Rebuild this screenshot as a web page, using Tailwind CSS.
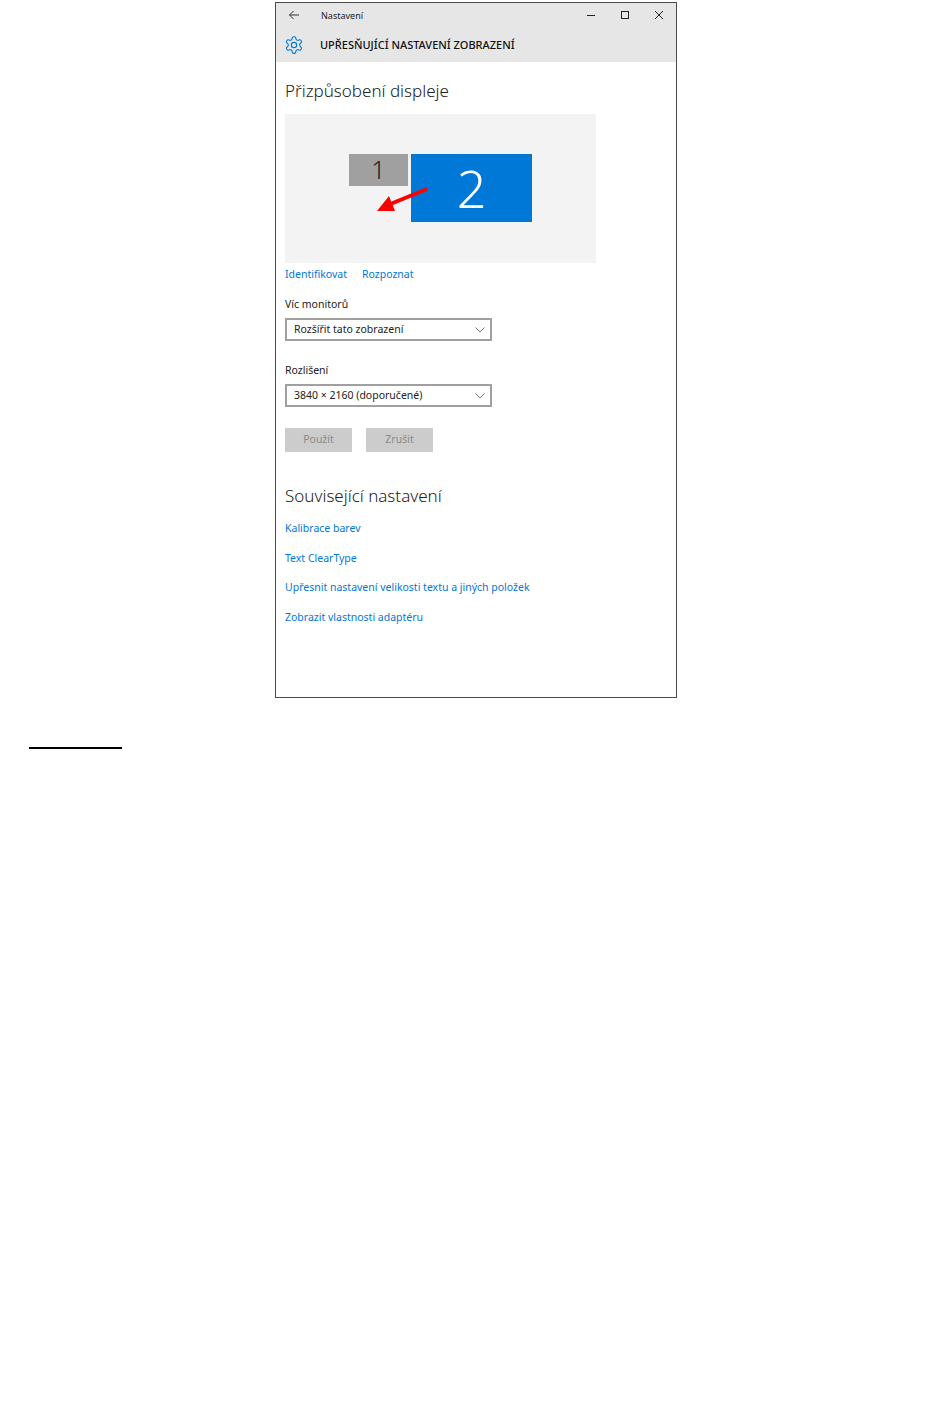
<!DOCTYPE html>
<html lang="cs">
<head>
  <meta charset="UTF-8" />
  <title>Nastavení</title>
  <script src="https://cdn.jsdelivr.net/npm/@tailwindcss/browser@4"></script>
</head>
<body class="h-[1408px] bg-white overflow-hidden font-['Noto_Sans','Open_Sans',sans-serif]">

  <!-- settings window -->
  <div class="ml-[275px] mt-[2px] w-[402px] h-[696px] border border-[#4a4a4a] flex flex-col">
    <div class="bg-[#e6e6e6] h-[59px] shrink-0">
      <div class="h-[24px] flex items-center text-[#222]">
        <svg class="ml-[12px] w-[12px] h-[12px]" viewBox="0 0 12 12" fill="none" stroke="#333" stroke-width="1"><path d="M11 6H1.5M5.5 2 1.5 6l4 4"/></svg>
        <span class="ml-[21px] text-[9px] leading-none">Nastavení</span>
        <svg class="ml-auto w-[10px] h-[10px]" viewBox="0 0 10 10" stroke="#222" fill="none"><path d="M1 5.5h8"/></svg>
        <svg class="ml-[24px] w-[10px] h-[10px]" viewBox="0 0 10 10" stroke="#222" fill="none"><rect x="1.5" y="1.5" width="7" height="7"/></svg>
        <svg class="ml-[24px] mr-[12px] w-[10px] h-[10px]" viewBox="0 0 10 10" stroke="#222" fill="none"><path d="m1 1 8 8M9 1 1 9"/></svg>
      </div>
      <div class="h-[35px] flex items-center">
        <svg class="ml-[8px] w-[20px] h-[20px]" viewBox="0 0 24 24" fill="none" stroke="#0078d7" stroke-width="1.3" stroke-linejoin="round"><circle cx="12" cy="12" r="3.2"/><path d="M12.22 2h-.44a2 2 0 0 0-2 2v.18a2 2 0 0 1-1 1.73l-.43.25a2 2 0 0 1-2 0l-.15-.08a2 2 0 0 0-2.73.73l-.22.38a2 2 0 0 0 .73 2.73l.15.1a2 2 0 0 1 1 1.72v.51a2 2 0 0 1-1 1.74l-.15.09a2 2 0 0 0-.73 2.73l.22.38a2 2 0 0 0 2.73.73l.15-.08a2 2 0 0 1 2 0l.43.25a2 2 0 0 1 1 1.73V20a2 2 0 0 0 2 2h.44a2 2 0 0 0 2-2v-.18a2 2 0 0 1 1-1.73l.43-.25a2 2 0 0 1 2 0l.15.08a2 2 0 0 0 2.73-.73l.22-.39a2 2 0 0 0-.73-2.73l-.15-.08a2 2 0 0 1-1-1.74v-.5a2 2 0 0 1 1-1.74l.15-.09a2 2 0 0 0 .73-2.73l-.22-.38a2 2 0 0 0-2.73-.73l-.15.08a2 2 0 0 1-2 0l-.43-.25a2 2 0 0 1-1-1.73V4a2 2 0 0 0-2-2z"/></svg>
        <span class="ml-[16px] text-[11px] leading-none text-[#111] font-medium whitespace-nowrap">UPŘESŇUJÍCÍ NASTAVENÍ ZOBRAZENÍ</span>
      </div>
    </div>

    <div class="pl-[9px] flex flex-col">
      <h1 class="mt-[17px] h-[24px] text-[17px] leading-[24px] font-light text-[#222]">Přizpůsobení displeje</h1>

      <!-- monitor preview -->
      <div class="relative mt-[11px] w-[311px] h-[149px] bg-[#f3f3f3]">
        <div class="absolute left-[64px] top-[40px] w-[59px] h-[32px] bg-[#a0a0a0] flex items-center justify-center text-[25px] font-light text-[#222]">1</div>
        <div class="absolute left-[126px] top-[40px] w-[121px] h-[68px] bg-[#0078d7] flex items-center justify-center text-[52px] font-light text-white">2</div>
        <svg class="absolute left-[88px] top-[70px]" width="60" height="34" viewBox="0 0 60 34"><path d="M54 5 15 21" stroke="#ff0000" stroke-width="4"/><path d="M4 27 16 12l6 15z" fill="#ff0000"/></svg>
      </div>

      <div class="mt-[4px] flex gap-[15px] text-[10.5px] leading-[14px] text-[#0078d7]">
        <span>Identifikovat</span><span>Rozpoznat</span>
      </div>

      <label class="mt-[16px] text-[10.5px] leading-[14px] text-[#222]">Víc monitorů</label>
      <div class="mt-[7px] w-[207px] h-[23px] border-2 border-[#a0a0a0] flex items-center justify-between pl-[7px] pr-[5px] text-[10.5px] text-[#222]">
        <span>Rozšířit tato zobrazení</span>
        <svg class="w-[10px] h-[6px]" viewBox="0 0 10 6" fill="none" stroke="#777"><path d="m.5.5 4.5 4.5L9.500.5"/></svg>
      </div>

      <label class="mt-[22px] text-[10.5px] leading-[14px] text-[#222]">Rozlišení</label>
      <div class="mt-[7px] w-[207px] h-[23px] border-2 border-[#a0a0a0] flex items-center justify-between pl-[7px] pr-[5px] text-[10.5px] text-[#222]">
        <span>3840 × 2160 (doporučené)</span>
        <svg class="w-[10px] h-[6px]" viewBox="0 0 10 6" fill="none" stroke="#777"><path d="m.5.5 4.5 4.5L9.500.5"/></svg>
      </div>

      <div class="mt-[21px] flex gap-[14px] text-[10.5px] text-[#8a8a8a]">
        <div class="w-[67px] h-[24px] bg-[#cccccc] flex items-center justify-center">Použít</div>
        <div class="w-[67px] h-[24px] bg-[#cccccc] flex items-center justify-center">Zrušit</div>
      </div>

      <h2 class="mt-[32px] h-[24px] text-[17px] leading-[24px] font-light text-[#222]">Související nastavení</h2>

      <div class="mt-[13px] flex flex-col gap-[15.6px] text-[10.5px] leading-[14px] text-[#0078d7]">
        <span>Kalibrace barev</span>
        <span>Text ClearType</span>
        <span>Upřesnit nastavení velikosti textu a jiných položek</span>
        <span>Zobrazit vlastnosti adaptéru</span>
      </div>
    </div>
  </div>

  <!-- underlined heading rule -->
  <div class="ml-[29px] mt-[49px] w-[93px] h-[2px] bg-black"></div>
</body>
</html>
